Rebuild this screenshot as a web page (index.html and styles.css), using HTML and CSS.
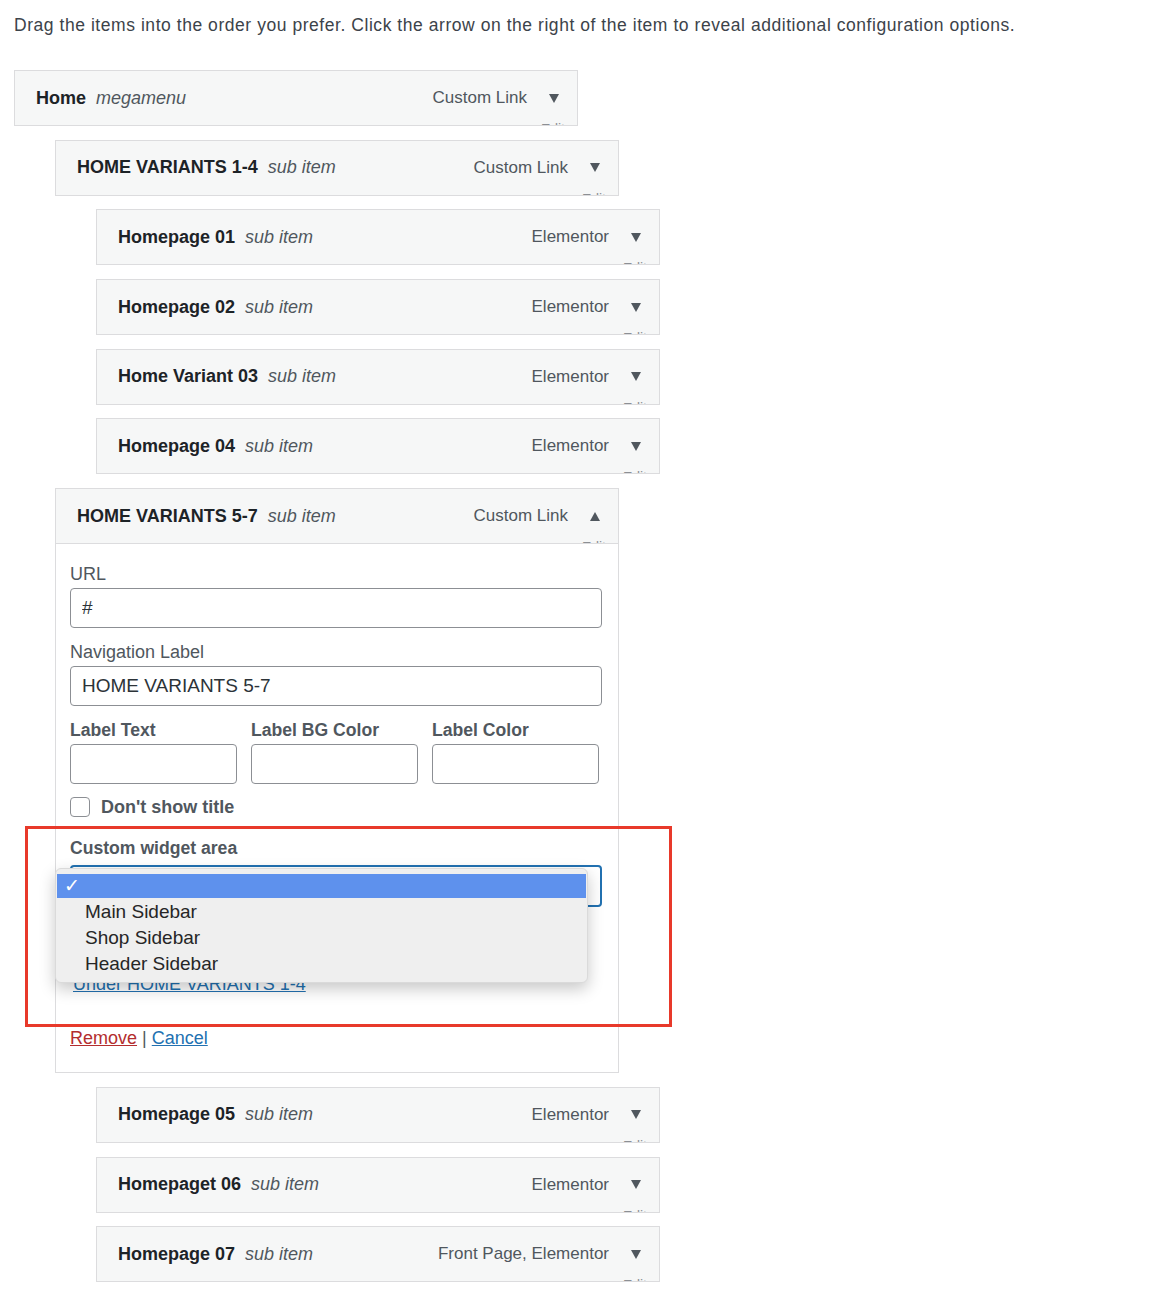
FILE: index.html
```html
<!DOCTYPE html>
<html lang="en">
<head>
    <meta charset="UTF-8">
    <meta name="viewport" content="width=device-width, initial-scale=1.0">
    <title>Menu Structure</title>
    <link rel="stylesheet" href="styles.css">
</head>
<body>

<p class="intro">Drag the items into the order you prefer. Click the arrow on the right of the item to reveal additional configuration options.</p>

<ul class="menu">
    <li class="menu-item depth-0">
        <div class="item-bar">
            <span class="item-title">Home</span>
            <span class="item-sub">megamenu</span>
            <span class="item-type">Custom Link</span>
            <span class="item-arrow"></span>
            <span class="item-edit">Edit</span>
        </div>
    </li>
    <li class="menu-item depth-1">
        <div class="item-bar">
            <span class="item-title">HOME VARIANTS 1-4</span>
            <span class="item-sub">sub item</span>
            <span class="item-type">Custom Link</span>
            <span class="item-arrow"></span>
            <span class="item-edit">Edit</span>
        </div>
    </li>
    <li class="menu-item depth-2">
        <div class="item-bar">
            <span class="item-title">Homepage 01</span>
            <span class="item-sub">sub item</span>
            <span class="item-type">Elementor</span>
            <span class="item-arrow"></span>
            <span class="item-edit">Edit</span>
        </div>
    </li>
    <li class="menu-item depth-2">
        <div class="item-bar">
            <span class="item-title">Homepage 02</span>
            <span class="item-sub">sub item</span>
            <span class="item-type">Elementor</span>
            <span class="item-arrow"></span>
            <span class="item-edit">Edit</span>
        </div>
    </li>
    <li class="menu-item depth-2">
        <div class="item-bar">
            <span class="item-title">Home Variant 03</span>
            <span class="item-sub">sub item</span>
            <span class="item-type">Elementor</span>
            <span class="item-arrow"></span>
            <span class="item-edit">Edit</span>
        </div>
    </li>
    <li class="menu-item depth-2">
        <div class="item-bar">
            <span class="item-title">Homepage 04</span>
            <span class="item-sub">sub item</span>
            <span class="item-type">Elementor</span>
            <span class="item-arrow"></span>
            <span class="item-edit">Edit</span>
        </div>
    </li>
    <li class="menu-item depth-1 open">
        <div class="item-bar">
            <span class="item-title">HOME VARIANTS 5-7</span>
            <span class="item-sub">sub item</span>
            <span class="item-type">Custom Link</span>
            <span class="item-arrow up"></span>
            <span class="item-edit">Edit</span>
        </div>
        <div class="item-settings">
            <label class="field-label" for="url">URL</label>
            <input class="field-input" type="text" id="url" value="#">

            <label class="field-label" for="navLabel">Navigation Label</label>
            <input class="field-input" type="text" id="navLabel" value="HOME VARIANTS 5-7">

            <div class="label-row">
                <div class="label-col">
                    <label class="field-label strong" for="labelText">Label Text</label>
                    <input class="field-input" type="text" id="labelText">
                </div>
                <div class="label-col">
                    <label class="field-label strong" for="labelBg">Label BG Color</label>
                    <input class="field-input" type="text" id="labelBg">
                </div>
                <div class="label-col">
                    <label class="field-label strong" for="labelColor">Label Color</label>
                    <input class="field-input" type="text" id="labelColor">
                </div>
            </div>

            <label class="check-row">
                <span class="check-box"></span>
                <span>Don't show title</span>
            </label>

            <div class="widget-zone">
                <div class="callout"></div>
                <label class="field-label strong" for="widgetArea">Custom widget area</label>
                <div class="fake-select" id="widgetArea"></div>

                <div class="move-row">
                    <a href="#">Under HOME VARIANTS 1-4</a>
                </div>

                <div class="dropdown">
                    <div class="dropdown-option selected"><span class="check">&#10003;</span></div>
                    <div class="dropdown-option">Main Sidebar</div>
                    <div class="dropdown-option">Shop Sidebar</div>
                    <div class="dropdown-option">Header Sidebar</div>
                </div>
            </div>

            <div class="item-actions">
                <a href="#" class="remove-link">Remove</a>
                <span class="sep">|</span>
                <a href="#" class="cancel-link">Cancel</a>
            </div>
        </div>
    </li>
    <li class="menu-item depth-2">
        <div class="item-bar">
            <span class="item-title">Homepage 05</span>
            <span class="item-sub">sub item</span>
            <span class="item-type">Elementor</span>
            <span class="item-arrow"></span>
            <span class="item-edit">Edit</span>
        </div>
    </li>
    <li class="menu-item depth-2">
        <div class="item-bar">
            <span class="item-title">Homepaget 06</span>
            <span class="item-sub">sub item</span>
            <span class="item-type">Elementor</span>
            <span class="item-arrow"></span>
            <span class="item-edit">Edit</span>
        </div>
    </li>
    <li class="menu-item depth-2">
        <div class="item-bar">
            <span class="item-title">Homepage 07</span>
            <span class="item-sub">sub item</span>
            <span class="item-type">Front Page, Elementor</span>
            <span class="item-arrow"></span>
            <span class="item-edit">Edit</span>
        </div>
    </li>
</ul>

</body>
</html>
```

FILE: styles.css
```css
body {
    font-family: "Liberation Sans", Arial, sans-serif;
    background-color: #fff;
    color: #3c434a;
    margin: 0;
    padding: 0 14px;
}

.intro {
    font-size: 17.5px;
    letter-spacing: 0.55px;
    line-height: 24px;
    margin: 13px 0 0;
    color: #3c434a;
}

.menu {
    list-style: none;
    margin: 33px 0 0;
    padding: 0;
}

.menu-item {
    width: 564px;
    margin-bottom: 13.7px;
}

.depth-1 {
    margin-left: 41px;
}

.depth-2 {
    margin-left: 82px;
}

.item-bar {
    position: relative;
    display: flex;
    align-items: center;
    height: 56px;
    box-sizing: border-box;
    padding: 0 18px 0 21px;
    background-color: #f6f7f7;
    border: 1px solid #dcdcde;
    overflow: hidden;
}

.item-title {
    font-size: 18px;
    font-weight: bold;
    color: #1d2327;
}

.item-sub {
    font-size: 18px;
    font-style: italic;
    color: #50575e;
    margin-left: 10px;
}

.item-type {
    margin-left: auto;
    font-size: 17px;
    color: #50575e;
}

.item-arrow {
    width: 0;
    height: 0;
    margin-left: 22px;
    border-left: 5.5px solid transparent;
    border-right: 5.5px solid transparent;
    border-top: 9px solid #50575e;
}

.item-arrow.up {
    border-top: none;
    border-bottom: 9px solid #50575e;
}

.item-edit {
    position: absolute;
    right: 12px;
    bottom: -12px;
    font-size: 14px;
    color: #8c8f94;
}

/* expanded item */

.item-settings {
    border: 1px solid #dcdcde;
    border-top: none;
    padding: 19px 16px 23px 14px;
    box-sizing: border-box;
}

.field-label {
    display: block;
    font-size: 18px;
    line-height: 22px;
    color: #50575e;
}

.field-label.strong {
    font-weight: bold;
    font-size: 17.6px;
}

.field-input {
    display: block;
    width: 100%;
    height: 40px;
    margin: 3px 0 13px;
    padding: 0 11px;
    box-sizing: border-box;
    border: 1px solid #8c8f94;
    border-radius: 4px;
    font-family: inherit;
    font-size: 19px;
    color: #2c3338;
    background: #fff;
}

.label-row {
    display: flex;
    gap: 14px;
    padding-right: 3px;
}

.label-col {
    flex: 1;
}

.check-row {
    display: flex;
    align-items: center;
    gap: 11px;
    font-size: 18px;
    font-weight: bold;
    color: #50575e;
    height: 20px;
}

.check-box {
    width: 20px;
    height: 20px;
    box-sizing: border-box;
    border: 1px solid #8c8f94;
    border-radius: 4px;
    background: #fff;
}

.widget-zone {
    position: relative;
    margin-top: 20px;
}

.callout {
    position: absolute;
    left: -45px;
    top: -11px;
    width: 647px;
    height: 201px;
    box-sizing: border-box;
    border: 3px solid #e8392a;
}

.fake-select {
    height: 42px;
    margin-top: 6px;
    box-sizing: border-box;
    border: 2px solid #2271b1;
    border-radius: 4px;
    background: #fff;
}

.move-row {
    margin-top: 66px;
    padding-left: 3px;
    font-size: 18px;
    line-height: 22px;
}

.move-row a {
    color: #2271b1;
}

.dropdown {
    position: absolute;
    left: -15px;
    top: 31px;
    width: 533px;
    padding: 5px 1px;
    box-sizing: border-box;
    background: #efefef;
    border: 1px solid #dadada;
    border-radius: 6px;
    box-shadow: 0 6px 16px rgba(0, 0, 0, 0.22);
}

.dropdown-option {
    height: 26px;
    line-height: 26px;
    padding-left: 28px;
    font-size: 19px;
    color: #262626;
}

.dropdown-option.selected {
    position: relative;
    height: 24px;
    margin-bottom: 1px;
    background: #5e91ed;
    color: #fff;
}

.dropdown-option .check {
    position: absolute;
    left: 7px;
    top: 0;
    font-size: 19px;
    line-height: 24px;
}

.item-actions {
    margin-top: 32px;
    font-size: 18px;
    line-height: 22px;
}

.remove-link {
    color: #b32d2e;
}

.cancel-link {
    color: #2271b1;
}

.sep {
    color: #50575e;
}
```
